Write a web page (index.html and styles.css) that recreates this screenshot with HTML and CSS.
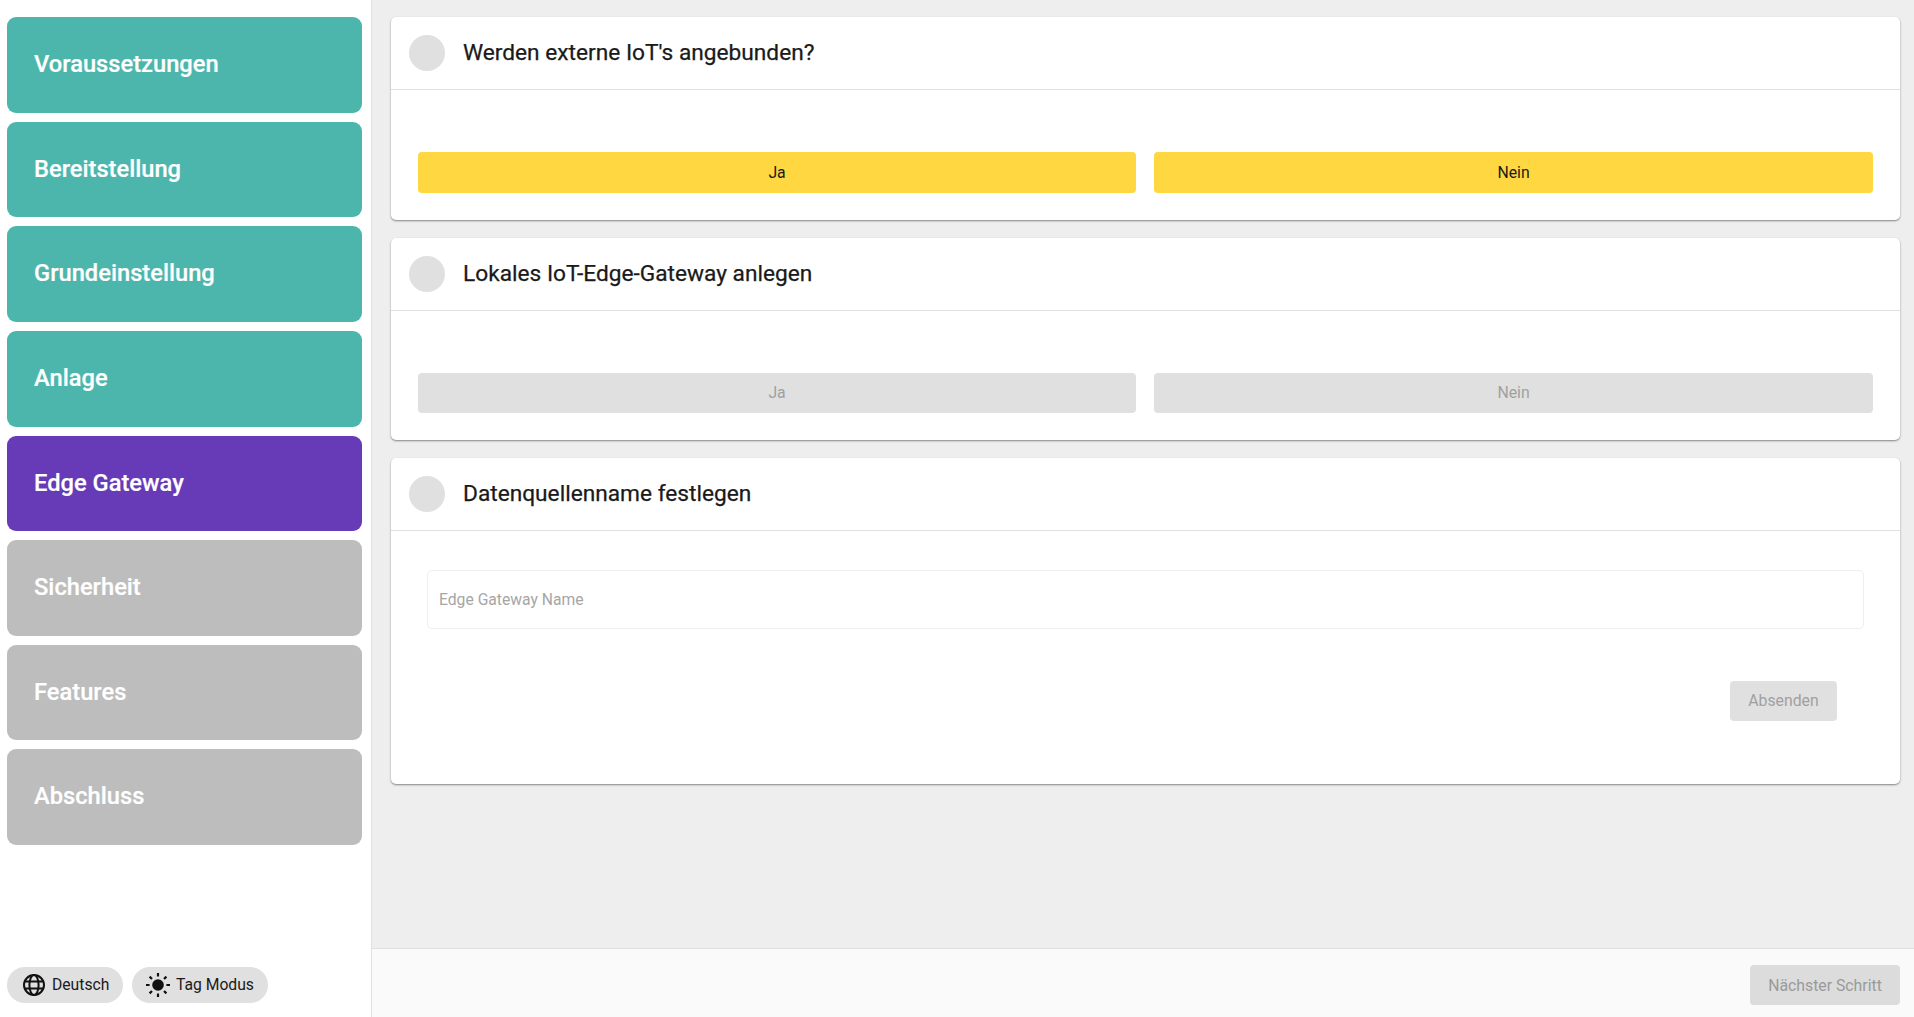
FILE: index.html
```html
<!DOCTYPE html>
<html lang="de">
<head>
<meta charset="utf-8">
<title>Edge Gateway</title>
<link rel="stylesheet" href="styles.css">
</head>
<body>
<div class="app">
  <aside class="sidebar">
    <nav class="steps">
      <div class="step done">Voraussetzungen</div>
      <div class="step done">Bereitstellung</div>
      <div class="step done">Grundeinstellung</div>
      <div class="step done">Anlage</div>
      <div class="step active">Edge Gateway</div>
      <div class="step todo">Sicherheit</div>
      <div class="step todo">Features</div>
      <div class="step todo">Abschluss</div>
    </nav>
    <div class="pills">
      <div class="pill pill-lang">
        <svg class="icon" viewBox="0 0 24 24" fill="none" stroke="#111" stroke-width="2"><circle cx="12" cy="12" r="10"/><ellipse cx="12" cy="12" rx="4.6" ry="10"/><path d="M2.8 8.4h18.4M2.8 15.6h18.4"/></svg>
        <span>Deutsch</span>
      </div>
      <div class="pill pill-mode">
        <svg class="icon icon-sun" viewBox="0 0 26 26" fill="none" stroke="#111" stroke-width="2.2" stroke-linecap="butt"><circle cx="13" cy="13" r="5.8" fill="#111" stroke="none"/><path d="M13 1v3.6M13 21.4v3.6M1 13h3.6M21.4 13h3.6M4.6 4.6l2.4 2.4M19 19l2.4 2.4M4.6 21.4L7 19M19 7l2.4-2.4"/></svg>
        <span>Tag Modus</span>
      </div>
    </div>
  </aside>
  <div class="main">
    <main class="content">
      <section class="card">
        <header class="card-head"><span class="dot"></span><h2>Werden externe IoT's angebunden?</h2></header>
        <div class="card-body choice">
          <button class="btn yellow">Ja</button>
          <button class="btn yellow">Nein</button>
        </div>
      </section>
      <section class="card">
        <header class="card-head"><span class="dot"></span><h2>Lokales IoT-Edge-Gateway anlegen</h2></header>
        <div class="card-body choice">
          <button class="btn off">Ja</button>
          <button class="btn off">Nein</button>
        </div>
      </section>
      <section class="card">
        <header class="card-head"><span class="dot"></span><h2>Datenquellenname festlegen</h2></header>
        <div class="card-body form">
          <input class="field" type="text" placeholder="Edge Gateway Name">
          <div class="form-actions"><button class="btn off submit">Absenden</button></div>
        </div>
      </section>
    </main>
    <footer class="footer"><button class="btn next">Nächster Schritt</button></footer>
  </div>
</div>
</body>
</html>
```
FILE: styles.css
```css
* { box-sizing: border-box; }
html, body { margin: 0; height: 100%; }
body { font-family: Roboto, "Noto Sans", sans-serif; color: #1a1a1a; background: #eee; overflow: hidden; }
.app { display: flex; height: 1017px; }
.sidebar { width: 372px; flex: none; background: #fff; border-right: 1px solid #e0e0e0; padding: 17.2px 9px 14px 7px; display: flex; flex-direction: column; justify-content: space-between; }
.steps { display: flex; flex-direction: column; gap: 9px; }
.step { height: 95.6px; border-radius: 9px; padding-left: 27px; display: flex; align-items: center; color: #fff; font-size: 23.7px; font-weight: 500; padding-bottom: 1.4px; -webkit-text-stroke: 0.2px #fff; }
.done { background: #4db6ac; }
.active { background: #673ab7; }
.todo { background: #bdbdbd; }
.pills { display: flex; gap: 9px; }
.pill { height: 36px; border-radius: 18px; background: #e0e0e0; display: flex; align-items: center; font-size: 15.7px; color: #1a1a1a; }
.pill span { padding-bottom: 1px; }
.pill-lang { width: 116px; padding-left: 15px; gap: 6px; }
.pill-mode { width: 136px; padding-left: 13px; gap: 5px; }
.icon { width: 24px; height: 24px; flex: none; }
.icon-sun { width: 26px; height: 26px; }
.main { flex: 1; min-width: 0; display: flex; flex-direction: column; }
.content { flex: 1; padding: 17px 14px 0 19px; display: flex; flex-direction: column; gap: 18px; }
.card { background: #fff; border-radius: 5px; box-shadow: 0 1px 2px rgba(0,0,0,.45); }
.card-head { height: 73px; border-bottom: 1px solid #e0e0e0; padding-left: 18px; display: flex; align-items: center; gap: 18px; }
.dot { width: 36px; height: 36px; border-radius: 50%; background: #e0e0e0; flex: none; }
h2 { margin: 0 0 1px; font-size: 22.7px; font-weight: 400; color: #1a1a1a; -webkit-text-stroke: 0.25px #1a1a1a; }
.choice { display: flex; gap: 18px; padding: 62px 27.2px 27px 26.8px; }
.choice .btn { flex: 1; }
.btn { height: 40.6px; border: 0; border-radius: 4px; font-family: inherit; font-size: 15.8px; font-weight: 400; padding: 0; }
.yellow { background: #ffd740; color: #1a1a1a; }
.off { background: #e0e0e0; color: #a0a0a0; }
.form { padding: 39.2px 36px 63.2px; }
.field { display: block; width: 100%; height: 58.6px; border: 1px solid #eee; border-radius: 5px; padding: 0 11px; font-family: inherit; font-size: 15.7px; background: #fff; outline: 0; }
.field::placeholder { color: #a6a6a6; opacity: 1; }
.form-actions { display: flex; justify-content: flex-end; padding: 52px 27px 0 0; }
.submit { width: 107px; height: 40px; }
.footer { height: 69px; flex: none; background: #fafafa; border-top: 1px solid #e0e0e0; padding: 16px 14px 0 0; display: flex; justify-content: flex-end; }
.next { width: 150px; height: 40px; background: #dcdcdc; color: #9a9a9a; }
```
